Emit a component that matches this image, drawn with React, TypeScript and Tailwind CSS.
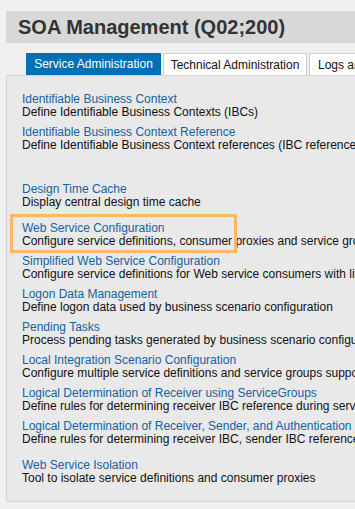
const items = [
  { title: 'Identifiable Business Context', desc: 'Define Identifiable Business Contexts (IBCs)' },
  { title: 'Identifiable Business Context Reference', desc: 'Define Identifiable Business Context references (IBC references)', after: 'mb-[31px]' },
  { title: 'Design Time Cache', desc: 'Display central design time cache', after: 'mb-[13px]' },
  { title: 'Web Service Configuration', desc: 'Configure service definitions, consumer proxies and service groups', marked: true },
  { title: 'Simplified Web Service Configuration', desc: 'Configure service definitions for Web service consumers with little effort' },
  { title: 'Logon Data Management', desc: 'Define logon data used by business scenario configuration' },
  { title: 'Pending Tasks', desc: 'Process pending tasks generated by business scenario configuration' },
  { title: 'Local Integration Scenario Configuration', desc: 'Configure multiple service definitions and service groups supporting a scenario' },
  { title: 'Logical Determination of Receiver using ServiceGroups', desc: 'Define rules for determining receiver IBC reference during service group calls' },
  { title: 'Logical Determination of Receiver, Sender, and Authentication', desc: 'Define rules for determining receiver IBC, sender IBC reference and authentication', after: 'mb-[13px]' },
  { title: 'Web Service Isolation', desc: 'Tool to isolate service definitions and consumer proxies' },
]

export default function App() {
  return (
    <div
      className="h-[509px] w-[355px] overflow-hidden bg-[#f0f0f0] whitespace-nowrap"
      style={{ fontFamily: '"Liberation Sans", Arial, sans-serif' }}
    >
      <div className="w-[460px] pl-[6px] pt-[11px]">
        <div className="flex h-[32px] items-center bg-[#d8d8d8] pl-[12px]">
          <h1 className="text-[20px] leading-none font-bold text-[#333333]">SOA Management (Q02;200)</h1>
        </div>

        <div className="mt-[10px] flex gap-[2px] pl-[20px]">
          <div className="flex h-[22px] w-[135px] items-center justify-center bg-[#0070b5] text-[12px] text-white">
            Service Administration
          </div>
          <div className="flex h-[22px] w-[144px] items-center justify-center border border-b-0 border-[#cfcfcf] bg-white text-[12px] text-[#111]">
            Technical Administration
          </div>
          <div className="flex h-[22px] items-center border border-b-0 border-[#cfcfcf] bg-white px-[8px] text-[12px] text-[#111]">
            Logs and Traces
          </div>
        </div>

        <div className="h-[427px] border border-[#d3d3d3] bg-[#e9e9e9] pl-[15px] pt-[17px]">
          <div className="flex flex-col">
            {items.map((it) => (
              <div key={it.title} className={`relative mb-[7px] text-[12px] leading-[13px] ${it.after ?? ''}`}>
                <div className="text-[#1463a3]">{it.title}</div>
                <div className="text-[#111]">{it.desc}</div>
                {it.marked && (
                  <div className="absolute left-[-12px] top-[-8px] h-[39px] w-[227px] border-[3px] border-[#fbb862]" />
                )}
              </div>
            ))}
          </div>
        </div>
      </div>
    </div>
  )
}
